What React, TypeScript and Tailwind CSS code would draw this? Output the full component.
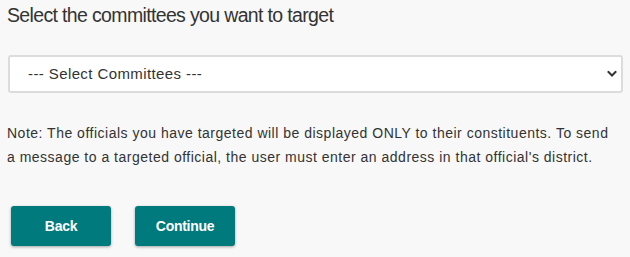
import * as React from 'react'

const font = { fontFamily: '"Liberation Sans", Arial, sans-serif' }

const App: React.FC = () => {
  const [committee, setCommittee] = React.useState('')

  return (
    <div className="min-h-[257px] w-[630px] bg-[#f8f8f8] text-[#333333] pl-[7px] pr-[7px]" style={font}>
      <h2 className="text-[19.5px] leading-[30px] font-normal tracking-[-0.65px]">
        Select the committees you want to target
      </h2>

      <div className="relative mt-[25px] ml-[1px] w-[615px]">
        <select
          value={committee}
          onChange={(e) => setCommittee(e.target.value)}
          className="appearance-none block w-full h-[38px] pl-[18px] pr-8 bg-white border-2 border-[#dcdcdc] rounded-[3px] text-[15px] tracking-[0.4px] text-[#333333] outline-none"
          style={font}
        >
          <option value="">--- Select Committees ---</option>
          <option value="finance">Finance</option>
          <option value="judiciary">Judiciary</option>
        </select>
        <svg
          className="pointer-events-none absolute right-[6px] top-1/2 -translate-y-1/2"
          width="10"
          height="7"
          viewBox="0 0 10 7"
          fill="none"
        >
          <path d="M1.5 1.5 L5 5 L8.5 1.5" stroke="#333" strokeWidth="2" strokeLinecap="square" />
        </svg>
      </div>

      <p className="mt-[28px] w-[620px] text-[14px] leading-[24px] tracking-[0.5px]">
        Note: The officials you have targeted will be displayed ONLY to their constituents. To send
        <br />
        a message to a targeted official, the user must enter an address in that official's district.
      </p>

      <div className="mt-[37px] ml-[4px] flex gap-6 pb-[11px]">
        <button className="w-[100px] h-[40px] rounded-[3px] bg-[#007a7c] text-white text-[14px] font-bold tracking-[-0.3px] shadow-[0_1px_3px_rgba(0,0,0,0.35)]">
          Back
        </button>
        <button className="w-[100px] h-[40px] rounded-[3px] bg-[#007a7c] text-white text-[14px] font-bold tracking-[-0.3px] shadow-[0_1px_3px_rgba(0,0,0,0.35)]">
          Continue
        </button>
      </div>
    </div>
  )
}

export default App
